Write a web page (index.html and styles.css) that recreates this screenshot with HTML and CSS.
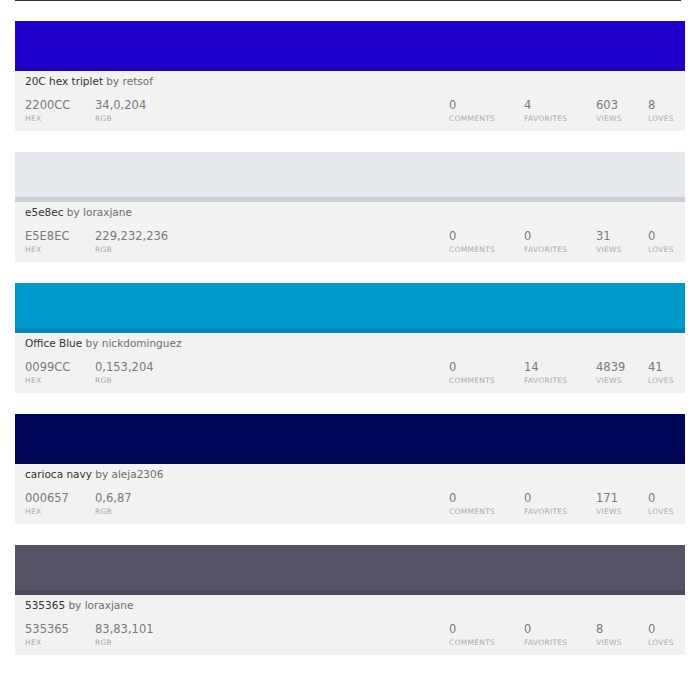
FILE: index.html
```html
<!DOCTYPE html>
<html>
<head>
<meta charset="utf-8">
<link rel="stylesheet" href="styles.css">
</head>
<body>
<div class="page">
  <div class="topline"></div>
  <div class="list">
    <div class="card">
      <div class="swatch" style="background:#2200CC"></div>
      <div class="info">
        <div class="title"><span class="name">20C hex triplet</span> by retsof</div>
        <div class="row">
          <div class="stat w-hex"><div class="val">2200CC</div><div class="lab">Hex</div></div>
          <div class="stat"><div class="val">34,0,204</div><div class="lab">RGB</div></div>
          <div class="counts">
            <div class="stat w-c"><div class="val">0</div><div class="lab">Comments</div></div>
            <div class="stat w-f"><div class="val">4</div><div class="lab">Favorites</div></div>
            <div class="stat w-v"><div class="val">603</div><div class="lab">Views</div></div>
            <div class="stat w-l"><div class="val">8</div><div class="lab">Loves</div></div>
          </div>
        </div>
      </div>
    </div>
    <div class="card">
      <div class="swatch" style="background:#E5E8EC"></div>
      <div class="info">
        <div class="title"><span class="name">e5e8ec</span> by loraxjane</div>
        <div class="row">
          <div class="stat w-hex"><div class="val">E5E8EC</div><div class="lab">Hex</div></div>
          <div class="stat"><div class="val">229,232,236</div><div class="lab">RGB</div></div>
          <div class="counts">
            <div class="stat w-c"><div class="val">0</div><div class="lab">Comments</div></div>
            <div class="stat w-f"><div class="val">0</div><div class="lab">Favorites</div></div>
            <div class="stat w-v"><div class="val">31</div><div class="lab">Views</div></div>
            <div class="stat w-l"><div class="val">0</div><div class="lab">Loves</div></div>
          </div>
        </div>
      </div>
    </div>
    <div class="card">
      <div class="swatch" style="background:#0099CC"></div>
      <div class="info">
        <div class="title"><span class="name">Office Blue</span> by nickdominguez</div>
        <div class="row">
          <div class="stat w-hex"><div class="val">0099CC</div><div class="lab">Hex</div></div>
          <div class="stat"><div class="val">0,153,204</div><div class="lab">RGB</div></div>
          <div class="counts">
            <div class="stat w-c"><div class="val">0</div><div class="lab">Comments</div></div>
            <div class="stat w-f"><div class="val">14</div><div class="lab">Favorites</div></div>
            <div class="stat w-v"><div class="val">4839</div><div class="lab">Views</div></div>
            <div class="stat w-l"><div class="val">41</div><div class="lab">Loves</div></div>
          </div>
        </div>
      </div>
    </div>
    <div class="card">
      <div class="swatch" style="background:#000657"></div>
      <div class="info">
        <div class="title"><span class="name">carioca navy</span> by aleja2306</div>
        <div class="row">
          <div class="stat w-hex"><div class="val">000657</div><div class="lab">Hex</div></div>
          <div class="stat"><div class="val">0,6,87</div><div class="lab">RGB</div></div>
          <div class="counts">
            <div class="stat w-c"><div class="val">0</div><div class="lab">Comments</div></div>
            <div class="stat w-f"><div class="val">0</div><div class="lab">Favorites</div></div>
            <div class="stat w-v"><div class="val">171</div><div class="lab">Views</div></div>
            <div class="stat w-l"><div class="val">0</div><div class="lab">Loves</div></div>
          </div>
        </div>
      </div>
    </div>
    <div class="card">
      <div class="swatch" style="background:#535365"></div>
      <div class="info">
        <div class="title"><span class="name">535365</span> by loraxjane</div>
        <div class="row">
          <div class="stat w-hex"><div class="val">535365</div><div class="lab">Hex</div></div>
          <div class="stat"><div class="val">83,83,101</div><div class="lab">RGB</div></div>
          <div class="counts">
            <div class="stat w-c"><div class="val">0</div><div class="lab">Comments</div></div>
            <div class="stat w-f"><div class="val">0</div><div class="lab">Favorites</div></div>
            <div class="stat w-v"><div class="val">8</div><div class="lab">Views</div></div>
            <div class="stat w-l"><div class="val">0</div><div class="lab">Loves</div></div>
          </div>
        </div>
      </div>
    </div>
  </div>
</div>
</body>
</html>
```

FILE: styles.css
```css
html, body {
  margin: 0;
  padding: 0;
  background: #ffffff;
}
body {
  font-family: "DejaVu Sans", "Liberation Sans", sans-serif;
}
.page {
  padding-left: 15px;
  width: 670px;
}
.topline {
  width: 666px;
  height: 1px;
  background: #333333;
}
.list {
  display: flex;
  flex-direction: column;
  gap: 21px;
  padding-top: 20px;
}
.card {
  width: 670px;
}
.swatch {
  height: 50px;
  box-shadow: inset 0 -5px 0 rgba(0, 0, 0, 0.1);
}
.info {
  height: 60px;
  box-sizing: border-box;
  background: #f2f2f2;
  padding: 3px 10px 0 10px;
}
.title {
  font-size: 10.5px;
  line-height: 14px;
  color: #6e6e6e;
}
.title .name {
  color: #333333;
}
.row {
  display: flex;
  margin-top: 10px;
}
.counts {
  display: flex;
  margin-left: auto;
}
.stat {
  display: flex;
  flex-direction: column;
}
.w-hex { width: 70px; }
.w-c { width: 75px; }
.w-f { width: 72px; }
.w-v { width: 52px; }
.w-l { width: 27px; }
.val {
  font-size: 11.5px;
  line-height: 15px;
  color: #7a7a7a;
}
.lab {
  font-size: 7.5px;
  line-height: 10px;
  margin-top: 1px;
  color: #adadad;
  text-transform: uppercase;
  letter-spacing: 0.3px;
}
```
